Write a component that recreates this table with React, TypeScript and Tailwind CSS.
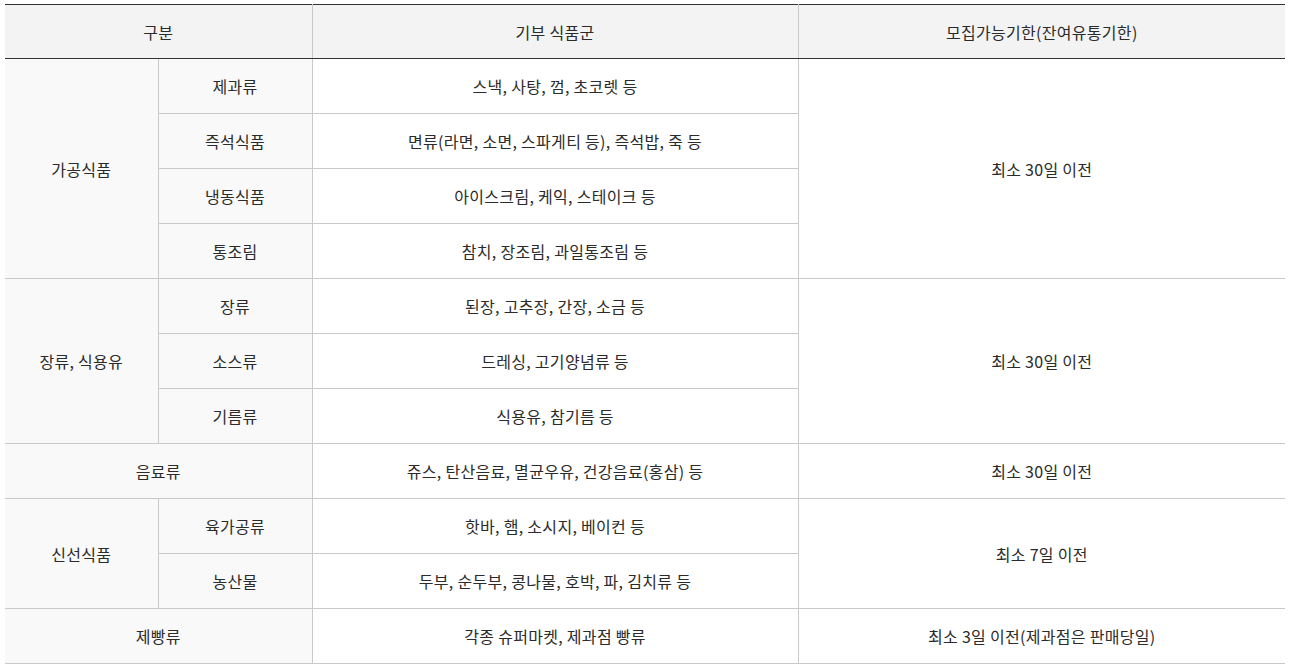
const font = { fontFamily: '"Malgun Gothic", "Noto Sans CJK KR", "Noto Sans", sans-serif' };

type Row = { group?: { label: string; span: number; sub?: boolean }; sub?: string; food: string; limit?: { text: string; span: number } };

const rows: Row[] = [
  { group: { label: '가공식품', span: 4, sub: true }, sub: '제과류', food: '스낵, 사탕, 껌, 초코렛 등', limit: { text: '최소 30일 이전', span: 4 } },
  { sub: '즉석식품', food: '면류(라면, 소면, 스파게티 등), 즉석밥, 죽 등' },
  { sub: '냉동식품', food: '아이스크림, 케익, 스테이크 등' },
  { sub: '통조림', food: '참치, 장조림, 과일통조림 등' },
  { group: { label: '장류, 식용유', span: 3, sub: true }, sub: '장류', food: '된장, 고추장, 간장, 소금 등', limit: { text: '최소 30일 이전', span: 3 } },
  { sub: '소스류', food: '드레싱, 고기양념류 등' },
  { sub: '기름류', food: '식용유, 참기름 등' },
  { group: { label: '음료류', span: 1 }, food: '쥬스, 탄산음료, 멸균우유, 건강음료(홍삼) 등', limit: { text: '최소 30일 이전', span: 1 } },
  { group: { label: '신선식품', span: 2, sub: true }, sub: '육가공류', food: '핫바, 햄, 소시지, 베이컨 등', limit: { text: '최소 7일 이전', span: 2 } },
  { sub: '농산물', food: '두부, 순두부, 콩나물, 호박, 파, 김치류 등' },
  { group: { label: '제빵류', span: 1 }, food: '각종 슈퍼마켓, 제과점 빵류', limit: { text: '최소 3일 이전(제과점은 판매당일)', span: 1 } },
];

export default function App() {
  const cell = 'border border-[#c9c9c9] text-center align-middle h-[55px] p-0';
  const head = 'font-normal bg-[#f3f3f3] border-t border-t-[#333] border-b border-b-[#333]';
  return (
    <div className="bg-white w-[1290px] h-[668px] pt-[4px] pl-[5px]" style={font}>
      <table className="border-collapse w-[1280px] table-fixed text-[16px] tracking-[0.3px] text-[#2b2b2b]">
        <colgroup>
          <col className="w-[153px]" />
          <col className="w-[154px]" />
          <col className="w-[486px]" />
          <col className="w-[487px]" />
        </colgroup>
        <thead>
          <tr>
            <th colSpan={2} className={`${head} h-[54px] border-r border-r-[#c9c9c9]`}>구분</th>
            <th className={`${head} border-x border-x-[#c9c9c9]`}>기부 식품군</th>
            <th className={`${head} border-l border-l-[#c9c9c9]`}>모집가능기한(잔여유통기한)</th>
          </tr>
        </thead>
        <tbody>
          {rows.map((r, i) => (
            <tr key={i}>
              {r.group && (
                <td
                  rowSpan={r.group.span}
                  colSpan={r.group.sub ? 1 : 2}
                  className={`${cell} bg-[#f9f9f9] border-l-0`}
                >
                  {r.group.label}
                </td>
              )}
              {r.sub && <td className={`${cell} bg-[#f9f9f9]`}>{r.sub}</td>}
              <td className={`${cell} bg-white`}>{r.food}</td>
              {r.limit && (
                <td rowSpan={r.limit.span} className={`${cell} bg-white border-r-0`}>
                  {r.limit.text}
                </td>
              )}
            </tr>
          ))}
        </tbody>
      </table>
    </div>
  );
}
